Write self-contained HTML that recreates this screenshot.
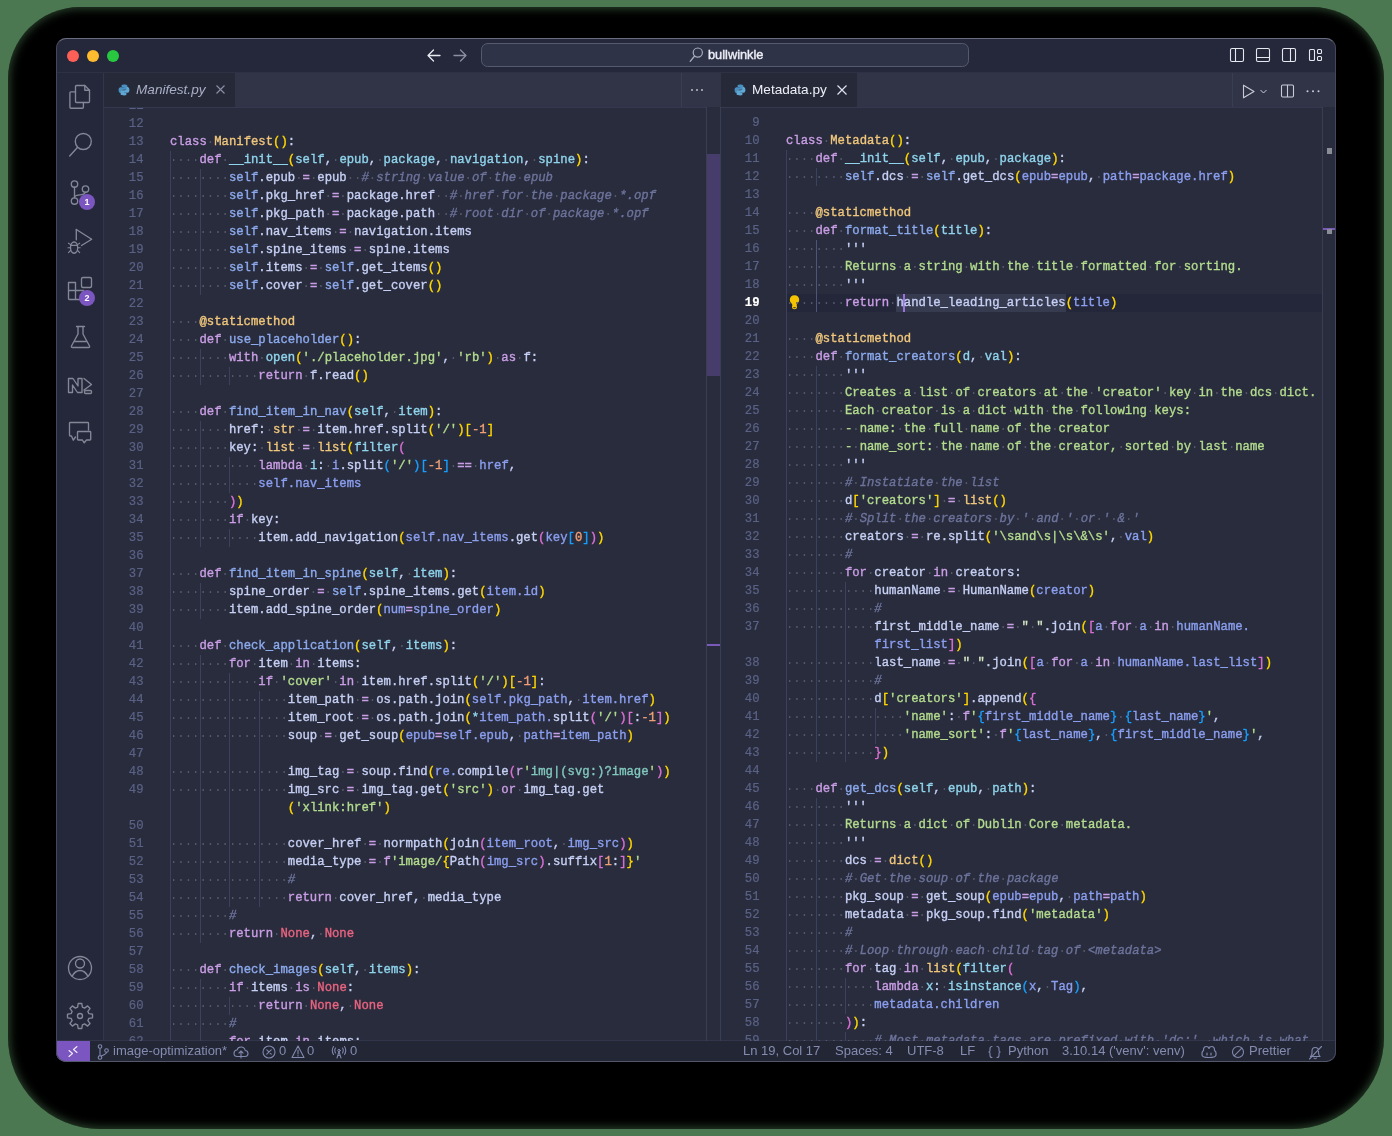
<!DOCTYPE html>
<html><head><meta charset="utf-8">
<style>
*{margin:0;padding:0;box-sizing:border-box}
html,body{width:1392px;height:1136px;overflow:hidden;background:#4b7751;position:relative;font-family:"Liberation Sans",sans-serif}
.abs{position:absolute}
#shadow{position:absolute;left:8px;top:7px;width:1376px;height:1122px;border-radius:72px 72px 92px 92px;background:#000;box-shadow:inset 0 0 8px 2px rgba(75,119,81,.55)}
#win{will-change:transform;position:absolute;left:56px;top:38px;width:1280px;height:1024px;border-radius:10px;overflow:hidden;background:#292c3c}
#wborder{position:absolute;left:56px;top:38px;width:1280px;height:1024px;border-radius:10px;border:1px solid #45485b;border-top-color:#6a6d80;border-bottom-color:#54576a;z-index:50}
#title{position:absolute;left:0;top:0;width:1280px;height:34px;background:#25283a}
.tl{position:absolute;top:12px;width:12px;height:12px;border-radius:50%}
#act{position:absolute;left:0;top:34px;width:48px;height:969px;background:#25283a;border-right:1px solid #33364a}
#tabs1{position:absolute;left:48px;top:34px;width:616px;height:35px;background:#303446}
#tabs2{position:absolute;left:664px;top:34px;width:616px;height:35px;background:#303446}
.tab{position:absolute;top:0;height:35px;background:#262938;white-space:pre;font-size:13.6px;color:#e4e8f6}
#status{position:absolute;left:0;top:1002px;width:1280px;height:22px;background:#232634;border-top:1px solid #33364a;color:#858cb0;font-size:13px}
.sb{position:absolute;top:1.5px;white-space:pre}
.ln{position:absolute;width:60px;text-align:right;font:12.27px/18px "Liberation Mono",monospace;color:#5b6286;white-space:pre;-webkit-text-stroke:0.2px currentColor;transform:scaleY(1.1);transform-origin:0 12px}
.ln.act{color:#ffffff;font-weight:bold}
.gd{position:absolute;width:1px;height:18px;background:#3c4160}
.ga{background:#4f5578}
.cr{position:absolute;font:12.27px/18px "Liberation Mono",monospace;color:#c6d0f5;white-space:pre;-webkit-text-stroke:0.35px currentColor;transform:scaleY(1.1);transform-origin:0 12px}
.cr b{font-weight:normal}
.cr i{font-style:normal;color:#55596c;-webkit-text-stroke:0;position:relative;top:1px}
.k{color:#ca9ee6}.c{color:#efc67c}.f{color:#8caaee}.p{color:#8fd4ec}.s{color:#8caaee}.o{color:#ca9ee6}
.cr b.cm{color:#6d739b;font-style:italic}.d{color:#efc67c}.bi{color:#8fd4ec}.st{color:#b3dc8e}.ty{color:#efc67c}
.n{color:#ef9f76}.no{color:#eb6480}.y{color:#ffd700}.m{color:#da70d6}.u{color:#179fff}.a{color:#8b9ff0}
.rx{color:#81c8be}.q2{color:#d5e6c6}.f2{color:#8fd4ec}.q{color:#c6d0f5}.ds{color:#b3dc8e}.hl{color:#c6d0f5}
svg{position:absolute;overflow:visible}
.ic{fill:none;stroke:#8b8fa3;stroke-width:1.2}
.badge{position:absolute;width:16px;height:16px;border-radius:50%;background:#7c56c0;color:#fff;font:bold 9px/16px "Liberation Sans";text-align:center}
</style></head><body>
<div id="shadow"></div>
<div id="win">
  <div id="title">
    <div class="tl" style="left:11px;background:#fe5f57"></div>
    <div class="tl" style="left:31px;background:#febc2e"></div>
    <div class="tl" style="left:51px;background:#28c840"></div>
    <svg style="left:0;top:0" width="1280" height="34">
      <g fill="none" stroke-linecap="round" stroke-linejoin="round">
        <path d="M372 17.5H384 M377.5 12L372 17.5L377.5 23" stroke="#e8eaf2" stroke-width="1.3"/>
        <path d="M398 17.5H410 M404.5 12L410 17.5L404.5 23" stroke="#8a8ea3" stroke-width="1.3"/>
        <rect x="425.5" y="5.5" width="487" height="23" rx="6" fill="#2f3347" stroke="#565a6e" stroke-width="1"/>
        <circle cx="641.8" cy="14.6" r="4.6" stroke="#a9adbd" stroke-width="1.2"/>
        <path d="M638.6 18L634.2 23.3" stroke="#a9adbd" stroke-width="1.3"/>
        <rect x="1174.5" y="10.5" width="13" height="13" rx="1.5" stroke="#e6e8f0" stroke-width="1.1"/>
        <path d="M1179.5 10.5V23.5" stroke="#e6e8f0" stroke-width="1.1"/>
        <rect x="1200.5" y="10.5" width="13" height="13" rx="1.5" stroke="#e6e8f0" stroke-width="1.1"/>
        <path d="M1200.5 19.5H1213.5" stroke="#e6e8f0" stroke-width="1.1"/>
        <rect x="1226.5" y="10.5" width="13" height="13" rx="1.5" stroke="#e6e8f0" stroke-width="1.1"/>
        <path d="M1234.5 10.5V23.5" stroke="#e6e8f0" stroke-width="1.1"/>
        <rect x="1253.5" y="11.5" width="5" height="11" rx="1" stroke="#e6e8f0" stroke-width="1.1"/>
        <rect x="1261.5" y="11.5" width="4" height="4" rx="1" stroke="#e6e8f0" stroke-width="1.1"/>
        <rect x="1261.5" y="18.5" width="4" height="4" rx="1" stroke="#e6e8f0" stroke-width="1.1"/>
      </g>
    </svg>
    <div class="abs" style="left:652px;top:9px;font:12.8px/16px 'Liberation Sans';color:#eceef6;-webkit-text-stroke:0.4px #eceef6">bullwinkle</div>
  </div>
  <div id="act">
    <svg style="left:0;top:0" width="48" height="969" fill="none" stroke="#838898" stroke-width="1.35" stroke-linejoin="round" stroke-linecap="round">
      <!-- explorer -->
      <path d="M19.5 19.8H14.9Q13.9 19.8 13.9 20.8V35.2Q13.9 36.2 14.9 36.2H26.4Q27.4 36.2 27.4 35.2V30.5"/>
      <path d="M20.5 13.5H28.8L33.5 18.2V29.5Q33.5 30.5 32.5 30.5H20.5Q19.5 30.5 19.5 29.5V14.5Q19.5 13.5 20.5 13.5Z"/>
      <path d="M28.8 13.5V18.2H33.5"/>
      <!-- search -->
      <circle cx="27.3" cy="69.5" r="8"/>
      <path d="M21.6 75.2L13.7 84"/>
      <!-- scm -->
      <circle cx="18.5" cy="112" r="3.2"/>
      <circle cx="29.5" cy="117" r="3.2"/>
      <circle cx="18.5" cy="129" r="3.2"/>
      <path d="M18.5 115.2V125.8 M18.6 125Q19.5 122.8 24 122.8Q28.3 122.8 29.4 120.3"/>
      <!-- run debug -->
      <path d="M20.3 157.5L35.7 167.2L25.5 173.5"/>
      <path d="M20.3 157.5V167.8"/>
      <ellipse cx="18.1" cy="175.6" rx="3.6" ry="5.6"/>
      <path d="M14.8 173.4H21.4 M12.5 171.2L14.6 172.6 M23.7 171.2L21.6 172.6 M12 175.8H14.5 M21.7 175.8H24.2 M12.5 180.6L14.6 178.5 M23.7 180.6L21.6 178.5" stroke-width="1.1"/>
      <!-- extensions -->
      <path d="M12.5 210.5H19.5V218.5H12.5Z M12.5 218.5H19.5V227.5H13.5Q12.5 227.5 12.5 226.5Z M19.5 218.5H27.5V226.5Q27.5 227.5 26.5 227.5H19.5"/>
      <rect x="25.5" y="205.5" width="10" height="10" rx="1.5"/>
      <!-- testing flask -->
      <path d="M20.5 254.5H28.5 M22 254.5V262L15.5 274Q15 275.5 16.5 275.5H32.5Q34 275.5 33.5 274L27 262V254.5 M18.5 269.5H30.5"/>
      <!-- N> icon -->
      <path d="M12.5 320.5V306.5H17L22 314V306.5H26V320.5H21.5L16.5 313V320.5Z"/>
      <path d="M28 306.5L35.5 312.5L28 318"/>
      <rect x="28.5" y="318.5" width="7" height="3" rx="1"/>
      <!-- chat -->
      <path d="M32.5 358V351.3Q32.5 350.5 31.7 350.5H14.3Q13.5 350.5 13.5 351.3V363.2Q13.5 364 14.3 364H15.5L17.3 368.2L19.5 365"/>
      <path d="M22.3 359.5H34Q34.7 359.5 34.7 360.3V367.2Q34.7 368 34 368H30.5L28.2 370.8L26.4 368H22.3Q21.5 368 21.5 367.2V360.3Q21.5 359.5 22.3 359.5Z"/>
      <!-- account -->
      <circle cx="24" cy="896" r="11.5"/>
      <circle cx="24" cy="891.5" r="4.5"/>
      <path d="M16 904.5Q19 898.5 24 898.5Q29 898.5 32 904.5"/>
      <!-- gear -->
      <path d="M22.2 931.5H25.8L26.4 935.2L28.6 936.1L31.6 933.9L34.1 936.4L31.9 939.4L32.8 941.6L36.5 942.2V945.8L32.8 946.4L31.9 948.6L34.1 951.6L31.6 954.1L28.6 951.9L26.4 952.8L25.8 956.5H22.2L21.6 952.8L19.4 951.9L16.4 954.1L13.9 951.6L16.1 948.6L15.2 946.4L11.5 945.8V942.2L15.2 941.6L16.1 939.4L13.9 936.4L16.4 933.9L19.4 936.1L21.6 935.2Z"/>
      <circle cx="24" cy="944" r="2.5"/>
    </svg>
    <div class="badge" style="left:23px;top:122px">1</div>
    <div class="badge" style="left:23px;top:218px">2</div>
  </div>
  <div id="tabs1">
    <div class="tab" style="left:0;width:131px">
      <svg style="left:14px;top:12px" width="12" height="12" viewBox="0 0 12 12"><path d="M5.8 0.6C3.5 0.6 3.6 1.6 3.6 1.6V2.9H5.9V3.3H2.7C2.7 3.3 0.6 3.1 0.6 6.1C0.6 9.1 2.5 9 2.5 9H3.5V7.6C3.5 7.6 3.4 5.8 5.3 5.8H7.7C7.7 5.8 9.4 5.8 9.4 4.1V1.9C9.4 1.9 9.7 0.6 5.8 0.6Z" fill="#4a8fc0"/><path d="M6.2 11.4C8.5 11.4 8.4 10.4 8.4 10.4V9.1H6.1V8.7H9.3C9.3 8.7 11.4 8.9 11.4 5.9C11.4 2.9 9.5 3 9.5 3H8.5V4.4C8.5 4.4 8.6 6.2 6.7 6.2H4.3C4.3 6.2 2.6 6.2 2.6 7.9V10.1C2.6 10.1 2.3 11.4 6.2 11.4Z" fill="#5fa8d3"/></svg>
      <div class="abs" style="left:32px;top:10px;font-style:italic;color:#a9afc6;font-size:13.6px">Manifest.py</div>
      <svg style="left:112px;top:13px" width="9" height="9"><path d="M0.5 0.5L8.5 8.5M8.5 0.5L0.5 8.5" stroke="#8a8fa5" stroke-width="1.1"/></svg>
    </div>
    <svg style="left:586px;top:16px" width="16" height="4"><circle cx="2" cy="2" r="1" fill="#b8bccb"/><circle cx="7" cy="2" r="1" fill="#b8bccb"/><circle cx="12" cy="2" r="1" fill="#b8bccb"/></svg>
    <div class="abs" style="left:577px;top:0;width:1px;height:35px;background:#3a3e52"></div>
  </div>
  <div id="tabs2">
    <div class="tab" style="left:1px;width:136px">
      <svg style="left:13px;top:12px" width="12" height="12" viewBox="0 0 12 12"><path d="M5.8 0.6C3.5 0.6 3.6 1.6 3.6 1.6V2.9H5.9V3.3H2.7C2.7 3.3 0.6 3.1 0.6 6.1C0.6 9.1 2.5 9 2.5 9H3.5V7.6C3.5 7.6 3.4 5.8 5.3 5.8H7.7C7.7 5.8 9.4 5.8 9.4 4.1V1.9C9.4 1.9 9.7 0.6 5.8 0.6Z" fill="#4a8fc0"/><path d="M6.2 11.4C8.5 11.4 8.4 10.4 8.4 10.4V9.1H6.1V8.7H9.3C9.3 8.7 11.4 8.9 11.4 5.9C11.4 2.9 9.5 3 9.5 3H8.5V4.4C8.5 4.4 8.6 6.2 6.7 6.2H4.3C4.3 6.2 2.6 6.2 2.6 7.9V10.1C2.6 10.1 2.3 11.4 6.2 11.4Z" fill="#5fa8d3"/></svg>
      <div class="abs" style="left:31px;top:10px;color:#eef0f8;font-size:13.6px">Metadata.py</div>
      <svg style="left:116px;top:13px" width="10" height="10"><path d="M0.5 0.5L9.5 9.5M9.5 0.5L0.5 9.5" stroke="#e0e3ee" stroke-width="1.2"/></svg>
    </div>
    <svg style="left:0;top:0" width="616" height="35" fill="none" stroke-linejoin="round">
      <path d="M523.5 13.2V25.8L534 19.5Z" stroke="#c9ccd8" stroke-width="1.1"/>
      <path d="M540.5 18L543.5 21L546.5 18" stroke="#c9ccd8" stroke-width="1"/>
      <rect x="561.5" y="13" width="12" height="12" rx="1.2" stroke="#c9ccd8" stroke-width="1.1"/>
      <path d="M567.5 13V25" stroke="#c9ccd8" stroke-width="1.1"/>
      <circle cx="587.5" cy="19.3" r="1" fill="#c9ccd8" stroke="none"/><circle cx="593" cy="19.3" r="1" fill="#c9ccd8" stroke="none"/><circle cx="598.5" cy="19.3" r="1" fill="#c9ccd8" stroke="none"/>
    </svg>
    <div class="abs" style="left:512px;top:0;width:1px;height:35px;background:#3a3e52"></div>
  </div>
  <div class="abs" style="left:0;top:34px;width:1280px;height:1px;background:#2e3143"></div>
  <div id="status">
    <div class="abs" style="left:0;top:0;width:34px;height:22px;background:#7c56c0"></div>
    <svg style="left:0;top:-0.5px" width="1280" height="22" fill="none" stroke-linecap="round" stroke-linejoin="round">
      <path d="M13 9.5L16.5 12.5L13 15.5 M21 5.5L17.5 8.5L21 11.5" stroke="#f2eefa" stroke-width="1.1"/>
      <!-- branch -->
      <circle cx="44" cy="5.5" r="1.8" stroke="#8088ad" stroke-width="1.1"/>
      <circle cx="44" cy="16.5" r="1.8" stroke="#8088ad" stroke-width="1.1"/>
      <circle cx="50.5" cy="9.5" r="1.8" stroke="#8088ad" stroke-width="1.1"/>
      <path d="M44 7.3V14.7 M50.5 11.3Q50.5 13 45.3 15" stroke="#8088ad" stroke-width="1.1"/>
      <!-- cloud -->
      <path d="M181 15.5H189Q192 15.5 192 12.5Q192 9.8 189.2 9.5Q188.5 6 185 6Q181.8 6 181 9Q178 9.3 178 12.3Q178 15.5 181 15.5Z M185 10V17 M183 12L185 10L187 12" stroke="#8088ad" stroke-width="1.1"/>
      <!-- error circle -->
      <circle cx="213" cy="11" r="6" stroke="#8088ad" stroke-width="1.1"/>
      <path d="M210.8 8.8L215.2 13.2 M215.2 8.8L210.8 13.2" stroke="#8088ad" stroke-width="1.1"/>
      <!-- warning -->
      <path d="M242 5L248 16.5H236Z M242 9V13 M242 14.5V15" stroke="#8088ad" stroke-width="1.1"/>
      <!-- radio tower -->
      <path d="M283 10.5L281 17 M283 10.5L285 17 M281.8 14.5H284.2 M279.5 7Q278 9 279.5 12 M286.5 7Q288 9 286.5 12 M277.5 5.5Q275 9.5 277.5 13.5 M288.5 5.5Q291 9.5 288.5 13.5" stroke="#8088ad" stroke-width="1.1"/>
      <circle cx="283" cy="9.5" r="1.2" stroke="#8088ad" stroke-width="1"/>
      <!-- braces -->
      <path d="M936 5.5Q934 5.5 934 7.5V9.5Q934 11 932.8 11Q934 11 934 12.5V14.5Q934 16.5 936 16.5 M941 5.5Q943 5.5 943 7.5V9.5Q943 11 944.2 11Q943 11 943 12.5V14.5Q943 16.5 941 16.5" stroke="#8088ad" stroke-width="1.1"/>
      <!-- copilot -->
      <path d="M1147.5 9Q1147.5 5.5 1150.5 5.5Q1152.5 5.5 1153 7.5Q1153.5 5.5 1155.5 5.5Q1158.5 5.5 1158.5 9V9.5Q1160 10.5 1160 12V14Q1160 16.5 1153 16.5Q1146 16.5 1146 14V12Q1146 10.5 1147.5 9.5Z M1151 12V14 M1155 12V14" stroke="#8088ad" stroke-width="1.2"/>
      <!-- prettier circle slash -->
      <circle cx="1182" cy="11" r="5.5" stroke="#8088ad" stroke-width="1.1"/>
      <path d="M1178.2 14.8L1185.8 7.2" stroke="#8088ad" stroke-width="1.1"/>
      <!-- bell slash -->
      <path d="M1254.5 15.5H1264Q1262.5 14 1262.5 11.5V10Q1262.5 6.5 1259.2 6.5Q1256 6.5 1256 10V11.5Q1256 14 1254.5 15.5 M1258 17Q1259.2 18.5 1260.5 17 M1253.5 18L1265.5 5.5" stroke="#8088ad" stroke-width="1.1"/>
    </svg>
    <div class="sb" style="left:57px">image-optimization*</div>
    <div class="sb" style="left:223px">0</div>
    <div class="sb" style="left:251px">0</div>
    <div class="sb" style="left:294px">0</div>
    <div class="sb" style="left:687px">Ln 19, Col 17</div>
    <div class="sb" style="left:779px">Spaces: 4</div>
    <div class="sb" style="left:851px">UTF-8</div>
    <div class="sb" style="left:904px">LF</div>
    <div class="sb" style="left:952px">Python</div>
    <div class="sb" style="left:1006px">3.10.14 ('venv': venv)</div>
    <div class="sb" style="left:1193px">Prettier</div>
  </div>
</div>
<div id="wborder"></div>
<div class="abs" style="left:104px;top:107px;width:602px;height:1px;background:#343850;z-index:5"></div>
<div class="abs" style="left:721px;top:107px;width:601px;height:1px;background:#343850;z-index:5"></div>
<div id="code" style="position:absolute;left:0;top:0;width:1392px;height:1136px;will-change:transform">
  <div style="position:absolute;left:104px;top:107px;width:616px;height:934px;overflow:hidden">
    <div style="position:absolute;left:-104px;top:-107px">
<div class="ln" style="top:97px;left:83.5px">11</div>
<div class="ln" style="top:115px;left:83.5px">12</div>
<div class="ln" style="top:133px;left:83.5px">13</div>
<div class="cr" style="top:133px;left:170.00px"><b class="k">class</b><i>·</i><b class="c">Manifest</b><b class="y">()</b><b class="t">:</b></div>
<div class="ln" style="top:151px;left:83.5px">14</div>
<div class="gd" style="top:151px;left:170px"></div>
<div class="cr" style="top:151px;left:170.00px"><i>····</i><b class="k">def</b><i>·</i><b class="f2">__init__</b><b class="y">(</b><b class="p">self</b><b class="t">,</b><i>·</i><b class="p">epub</b><b class="t">,</b><i>·</i><b class="p">package</b><b class="t">,</b><i>·</i><b class="p">navigation</b><b class="t">,</b><i>·</i><b class="p">spine</b><b class="y">)</b><b class="t">:</b></div>
<div class="ln" style="top:169px;left:83.5px">15</div>
<div class="gd" style="top:169px;left:170px"></div>
<div class="gd" style="top:169px;left:200px"></div>
<div class="cr" style="top:169px;left:170.00px"><i>········</i><b class="s">self</b><b class="t">.epub</b><i>·</i><b class="o">=</b><i>·</i><b class="t">epub</b><i>··</i><b class="cm">#</b><i>·</i><b class="cm">string</b><i>·</i><b class="cm">value</b><i>·</i><b class="cm">of</b><i>·</i><b class="cm">the</b><i>·</i><b class="cm">epub</b></div>
<div class="ln" style="top:187px;left:83.5px">16</div>
<div class="gd" style="top:187px;left:170px"></div>
<div class="gd" style="top:187px;left:200px"></div>
<div class="cr" style="top:187px;left:170.00px"><i>········</i><b class="s">self</b><b class="t">.pkg_href</b><i>·</i><b class="o">=</b><i>·</i><b class="t">package.href</b><i>··</i><b class="cm">#</b><i>·</i><b class="cm">href</b><i>·</i><b class="cm">for</b><i>·</i><b class="cm">the</b><i>·</i><b class="cm">package</b><i>·</i><b class="cm">*.opf</b></div>
<div class="ln" style="top:205px;left:83.5px">17</div>
<div class="gd" style="top:205px;left:170px"></div>
<div class="gd" style="top:205px;left:200px"></div>
<div class="cr" style="top:205px;left:170.00px"><i>········</i><b class="s">self</b><b class="t">.pkg_path</b><i>·</i><b class="o">=</b><i>·</i><b class="t">package.path</b><i>··</i><b class="cm">#</b><i>·</i><b class="cm">root</b><i>·</i><b class="cm">dir</b><i>·</i><b class="cm">of</b><i>·</i><b class="cm">package</b><i>·</i><b class="cm">*.opf</b></div>
<div class="ln" style="top:223px;left:83.5px">18</div>
<div class="gd" style="top:223px;left:170px"></div>
<div class="gd" style="top:223px;left:200px"></div>
<div class="cr" style="top:223px;left:170.00px"><i>········</i><b class="s">self</b><b class="t">.nav_items</b><i>·</i><b class="o">=</b><i>·</i><b class="t">navigation.items</b></div>
<div class="ln" style="top:241px;left:83.5px">19</div>
<div class="gd" style="top:241px;left:170px"></div>
<div class="gd" style="top:241px;left:200px"></div>
<div class="cr" style="top:241px;left:170.00px"><i>········</i><b class="s">self</b><b class="t">.spine_items</b><i>·</i><b class="o">=</b><i>·</i><b class="t">spine.items</b></div>
<div class="ln" style="top:259px;left:83.5px">20</div>
<div class="gd" style="top:259px;left:170px"></div>
<div class="gd" style="top:259px;left:200px"></div>
<div class="cr" style="top:259px;left:170.00px"><i>········</i><b class="s">self</b><b class="t">.items</b><i>·</i><b class="o">=</b><i>·</i><b class="s">self</b><b class="t">.get_items</b><b class="y">()</b></div>
<div class="ln" style="top:277px;left:83.5px">21</div>
<div class="gd" style="top:277px;left:170px"></div>
<div class="gd" style="top:277px;left:200px"></div>
<div class="cr" style="top:277px;left:170.00px"><i>········</i><b class="s">self</b><b class="t">.cover</b><i>·</i><b class="o">=</b><i>·</i><b class="s">self</b><b class="t">.get_cover</b><b class="y">()</b></div>
<div class="ln" style="top:295px;left:83.5px">22</div>
<div class="gd" style="top:295px;left:170px"></div>
<div class="ln" style="top:313px;left:83.5px">23</div>
<div class="gd" style="top:313px;left:170px"></div>
<div class="cr" style="top:313px;left:170.00px"><i>····</i><b class="d">@staticmethod</b></div>
<div class="ln" style="top:331px;left:83.5px">24</div>
<div class="gd" style="top:331px;left:170px"></div>
<div class="cr" style="top:331px;left:170.00px"><i>····</i><b class="k">def</b><i>·</i><b class="f">use_placeholder</b><b class="y">()</b><b class="t">:</b></div>
<div class="ln" style="top:349px;left:83.5px">25</div>
<div class="gd" style="top:349px;left:170px"></div>
<div class="gd" style="top:349px;left:200px"></div>
<div class="cr" style="top:349px;left:170.00px"><i>········</i><b class="k">with</b><i>·</i><b class="bi">open</b><b class="y">(</b><b class="st">&#x27;./placeholder.jpg&#x27;</b><b class="t">,</b><i>·</i><b class="st">&#x27;rb&#x27;</b><b class="y">)</b><i>·</i><b class="k">as</b><i>·</i><b class="t">f:</b></div>
<div class="ln" style="top:367px;left:83.5px">26</div>
<div class="gd" style="top:367px;left:170px"></div>
<div class="gd" style="top:367px;left:200px"></div>
<div class="gd" style="top:367px;left:229px"></div>
<div class="cr" style="top:367px;left:170.00px"><i>············</i><b class="k">return</b><i>·</i><b class="t">f.read</b><b class="y">()</b></div>
<div class="ln" style="top:385px;left:83.5px">27</div>
<div class="gd" style="top:385px;left:170px"></div>
<div class="ln" style="top:403px;left:83.5px">28</div>
<div class="gd" style="top:403px;left:170px"></div>
<div class="cr" style="top:403px;left:170.00px"><i>····</i><b class="k">def</b><i>·</i><b class="f">find_item_in_nav</b><b class="y">(</b><b class="p">self</b><b class="t">,</b><i>·</i><b class="p">item</b><b class="y">)</b><b class="t">:</b></div>
<div class="ln" style="top:421px;left:83.5px">29</div>
<div class="gd" style="top:421px;left:170px"></div>
<div class="gd" style="top:421px;left:200px"></div>
<div class="cr" style="top:421px;left:170.00px"><i>········</i><b class="t">href:</b><i>·</i><b class="ty">str</b><i>·</i><b class="o">=</b><i>·</i><b class="t">item.href.split</b><b class="y">(</b><b class="st">&#x27;/&#x27;</b><b class="y">)[</b><b class="n">-1</b><b class="y">]</b></div>
<div class="ln" style="top:439px;left:83.5px">30</div>
<div class="gd" style="top:439px;left:170px"></div>
<div class="gd" style="top:439px;left:200px"></div>
<div class="cr" style="top:439px;left:170.00px"><i>········</i><b class="t">key:</b><i>·</i><b class="ty">list</b><i>·</i><b class="o">=</b><i>·</i><b class="ty">list</b><b class="y">(</b><b class="bi">filter</b><b class="m">(</b></div>
<div class="ln" style="top:457px;left:83.5px">31</div>
<div class="gd" style="top:457px;left:170px"></div>
<div class="gd" style="top:457px;left:200px"></div>
<div class="gd" style="top:457px;left:229px"></div>
<div class="cr" style="top:457px;left:170.00px"><i>············</i><b class="k">lambda</b><i>·</i><b class="p">i</b><b class="t">:</b><i>·</i><b class="a">i</b><b class="t">.split</b><b class="u">(</b><b class="st">&#x27;/&#x27;</b><b class="u">)[</b><b class="n">-1</b><b class="u">]</b><i>·</i><b class="o">==</b><i>·</i><b class="a">href</b><b class="t">,</b></div>
<div class="ln" style="top:475px;left:83.5px">32</div>
<div class="gd" style="top:475px;left:170px"></div>
<div class="gd" style="top:475px;left:200px"></div>
<div class="gd" style="top:475px;left:229px"></div>
<div class="cr" style="top:475px;left:170.00px"><i>············</i><b class="a">self.nav_items</b></div>
<div class="ln" style="top:493px;left:83.5px">33</div>
<div class="gd" style="top:493px;left:170px"></div>
<div class="gd" style="top:493px;left:200px"></div>
<div class="cr" style="top:493px;left:170.00px"><i>········</i><b class="m">)</b><b class="y">)</b></div>
<div class="ln" style="top:511px;left:83.5px">34</div>
<div class="gd" style="top:511px;left:170px"></div>
<div class="gd" style="top:511px;left:200px"></div>
<div class="cr" style="top:511px;left:170.00px"><i>········</i><b class="k">if</b><i>·</i><b class="t">key:</b></div>
<div class="ln" style="top:529px;left:83.5px">35</div>
<div class="gd" style="top:529px;left:170px"></div>
<div class="gd" style="top:529px;left:200px"></div>
<div class="gd" style="top:529px;left:229px"></div>
<div class="cr" style="top:529px;left:170.00px"><i>············</i><b class="t">item.add_navigation</b><b class="y">(</b><b class="a">self.nav_items</b><b class="t">.get</b><b class="m">(</b><b class="a">key</b><b class="u">[</b><b class="n">0</b><b class="u">]</b><b class="m">)</b><b class="y">)</b></div>
<div class="ln" style="top:547px;left:83.5px">36</div>
<div class="gd" style="top:547px;left:170px"></div>
<div class="ln" style="top:565px;left:83.5px">37</div>
<div class="gd" style="top:565px;left:170px"></div>
<div class="cr" style="top:565px;left:170.00px"><i>····</i><b class="k">def</b><i>·</i><b class="f">find_item_in_spine</b><b class="y">(</b><b class="p">self</b><b class="t">,</b><i>·</i><b class="p">item</b><b class="y">)</b><b class="t">:</b></div>
<div class="ln" style="top:583px;left:83.5px">38</div>
<div class="gd" style="top:583px;left:170px"></div>
<div class="gd" style="top:583px;left:200px"></div>
<div class="cr" style="top:583px;left:170.00px"><i>········</i><b class="t">spine_order</b><i>·</i><b class="o">=</b><i>·</i><b class="s">self</b><b class="t">.spine_items.get</b><b class="y">(</b><b class="a">item.id</b><b class="y">)</b></div>
<div class="ln" style="top:601px;left:83.5px">39</div>
<div class="gd" style="top:601px;left:170px"></div>
<div class="gd" style="top:601px;left:200px"></div>
<div class="cr" style="top:601px;left:170.00px"><i>········</i><b class="t">item.add_spine_order</b><b class="y">(</b><b class="a">num</b><b class="o">=</b><b class="a">spine_order</b><b class="y">)</b></div>
<div class="ln" style="top:619px;left:83.5px">40</div>
<div class="gd" style="top:619px;left:170px"></div>
<div class="ln" style="top:637px;left:83.5px">41</div>
<div class="gd" style="top:637px;left:170px"></div>
<div class="cr" style="top:637px;left:170.00px"><i>····</i><b class="k">def</b><i>·</i><b class="f">check_application</b><b class="y">(</b><b class="p">self</b><b class="t">,</b><i>·</i><b class="p">items</b><b class="y">)</b><b class="t">:</b></div>
<div class="ln" style="top:655px;left:83.5px">42</div>
<div class="gd" style="top:655px;left:170px"></div>
<div class="gd" style="top:655px;left:200px"></div>
<div class="cr" style="top:655px;left:170.00px"><i>········</i><b class="k">for</b><i>·</i><b class="t">item</b><i>·</i><b class="k">in</b><i>·</i><b class="t">items:</b></div>
<div class="ln" style="top:673px;left:83.5px">43</div>
<div class="gd" style="top:673px;left:170px"></div>
<div class="gd" style="top:673px;left:200px"></div>
<div class="gd" style="top:673px;left:229px"></div>
<div class="cr" style="top:673px;left:170.00px"><i>············</i><b class="k">if</b><i>·</i><b class="st">&#x27;cover&#x27;</b><i>·</i><b class="k">in</b><i>·</i><b class="t">item.href.split</b><b class="y">(</b><b class="st">&#x27;/&#x27;</b><b class="y">)[</b><b class="n">-1</b><b class="y">]</b><b class="t">:</b></div>
<div class="ln" style="top:691px;left:83.5px">44</div>
<div class="gd" style="top:691px;left:170px"></div>
<div class="gd" style="top:691px;left:200px"></div>
<div class="gd" style="top:691px;left:229px"></div>
<div class="gd" style="top:691px;left:259px"></div>
<div class="cr" style="top:691px;left:170.00px"><i>················</i><b class="t">item_path</b><i>·</i><b class="o">=</b><i>·</i><b class="t">os.path.join</b><b class="y">(</b><b class="a">self.pkg_path</b><b class="t">,</b><i>·</i><b class="a">item.href</b><b class="y">)</b></div>
<div class="ln" style="top:709px;left:83.5px">45</div>
<div class="gd" style="top:709px;left:170px"></div>
<div class="gd" style="top:709px;left:200px"></div>
<div class="gd" style="top:709px;left:229px"></div>
<div class="gd" style="top:709px;left:259px"></div>
<div class="cr" style="top:709px;left:170.00px"><i>················</i><b class="t">item_root</b><i>·</i><b class="o">=</b><i>·</i><b class="t">os.path.join</b><b class="y">(</b><b class="bi">*</b><b class="a">item_path.</b><b class="t">split</b><b class="m">(</b><b class="st">&#x27;/&#x27;</b><b class="m">)[</b><b class="t">:</b><b class="n">-1</b><b class="m">]</b><b class="y">)</b></div>
<div class="ln" style="top:727px;left:83.5px">46</div>
<div class="gd" style="top:727px;left:170px"></div>
<div class="gd" style="top:727px;left:200px"></div>
<div class="gd" style="top:727px;left:229px"></div>
<div class="gd" style="top:727px;left:259px"></div>
<div class="cr" style="top:727px;left:170.00px"><i>················</i><b class="t">soup</b><i>·</i><b class="o">=</b><i>·</i><b class="t">get_soup</b><b class="y">(</b><b class="a">epub</b><b class="o">=</b><b class="a">self.epub</b><b class="t">,</b><i>·</i><b class="a">path</b><b class="o">=</b><b class="a">item_path</b><b class="y">)</b></div>
<div class="ln" style="top:745px;left:83.5px">47</div>
<div class="gd" style="top:745px;left:170px"></div>
<div class="gd" style="top:745px;left:200px"></div>
<div class="gd" style="top:745px;left:229px"></div>
<div class="gd" style="top:745px;left:259px"></div>
<div class="ln" style="top:763px;left:83.5px">48</div>
<div class="gd" style="top:763px;left:170px"></div>
<div class="gd" style="top:763px;left:200px"></div>
<div class="gd" style="top:763px;left:229px"></div>
<div class="gd" style="top:763px;left:259px"></div>
<div class="cr" style="top:763px;left:170.00px"><i>················</i><b class="t">img_tag</b><i>·</i><b class="o">=</b><i>·</i><b class="t">soup.find</b><b class="y">(</b><b class="a">re.</b><b class="t">compile</b><b class="m">(</b><b class="k">r</b><b class="st">&#x27;</b><b class="rx">img|(svg:)?image</b><b class="st">&#x27;</b><b class="m">)</b><b class="y">)</b></div>
<div class="ln" style="top:781px;left:83.5px">49</div>
<div class="gd" style="top:781px;left:170px"></div>
<div class="gd" style="top:781px;left:200px"></div>
<div class="gd" style="top:781px;left:229px"></div>
<div class="gd" style="top:781px;left:259px"></div>
<div class="cr" style="top:781px;left:170.00px"><i>················</i><b class="t">img_src</b><i>·</i><b class="o">=</b><i>·</i><b class="t">img_tag.get</b><b class="y">(</b><b class="st">&#x27;src&#x27;</b><b class="y">)</b><i>·</i><b class="k">or</b><i>·</i><b class="t">img_tag.get</b></div>
<div class="gd" style="top:799px;left:170px"></div>
<div class="gd" style="top:799px;left:200px"></div>
<div class="gd" style="top:799px;left:229px"></div>
<div class="gd" style="top:799px;left:259px"></div>
<div class="cr" style="top:799px;left:287.79px"><b class="y">(</b><b class="st">&#x27;xlink:href&#x27;</b><b class="y">)</b></div>
<div class="ln" style="top:817px;left:83.5px">50</div>
<div class="gd" style="top:817px;left:170px"></div>
<div class="gd" style="top:817px;left:200px"></div>
<div class="gd" style="top:817px;left:229px"></div>
<div class="gd" style="top:817px;left:259px"></div>
<div class="ln" style="top:835px;left:83.5px">51</div>
<div class="gd" style="top:835px;left:170px"></div>
<div class="gd" style="top:835px;left:200px"></div>
<div class="gd" style="top:835px;left:229px"></div>
<div class="gd" style="top:835px;left:259px"></div>
<div class="cr" style="top:835px;left:170.00px"><i>················</i><b class="t">cover_href</b><i>·</i><b class="o">=</b><i>·</i><b class="t">normpath</b><b class="y">(</b><b class="t">join</b><b class="m">(</b><b class="a">item_root</b><b class="t">,</b><i>·</i><b class="a">img_src</b><b class="m">)</b><b class="y">)</b></div>
<div class="ln" style="top:853px;left:83.5px">52</div>
<div class="gd" style="top:853px;left:170px"></div>
<div class="gd" style="top:853px;left:200px"></div>
<div class="gd" style="top:853px;left:229px"></div>
<div class="gd" style="top:853px;left:259px"></div>
<div class="cr" style="top:853px;left:170.00px"><i>················</i><b class="t">media_type</b><i>·</i><b class="o">=</b><i>·</i><b class="k">f</b><b class="st">&#x27;image/</b><b class="y">{</b><b class="t">Path</b><b class="m">(</b><b class="a">img_src</b><b class="m">)</b><b class="t">.suffix</b><b class="m">[</b><b class="n">1</b><b class="t">:</b><b class="m">]</b><b class="y">}</b><b class="st">&#x27;</b></div>
<div class="ln" style="top:871px;left:83.5px">53</div>
<div class="gd" style="top:871px;left:170px"></div>
<div class="gd" style="top:871px;left:200px"></div>
<div class="gd" style="top:871px;left:229px"></div>
<div class="gd" style="top:871px;left:259px"></div>
<div class="cr" style="top:871px;left:170.00px"><i>················</i><b class="cm">#</b></div>
<div class="ln" style="top:889px;left:83.5px">54</div>
<div class="gd" style="top:889px;left:170px"></div>
<div class="gd" style="top:889px;left:200px"></div>
<div class="gd" style="top:889px;left:229px"></div>
<div class="gd" style="top:889px;left:259px"></div>
<div class="cr" style="top:889px;left:170.00px"><i>················</i><b class="k">return</b><i>·</i><b class="t">cover_href,</b><i>·</i><b class="t">media_type</b></div>
<div class="ln" style="top:907px;left:83.5px">55</div>
<div class="gd" style="top:907px;left:170px"></div>
<div class="gd" style="top:907px;left:200px"></div>
<div class="cr" style="top:907px;left:170.00px"><i>········</i><b class="cm">#</b></div>
<div class="ln" style="top:925px;left:83.5px">56</div>
<div class="gd" style="top:925px;left:170px"></div>
<div class="gd" style="top:925px;left:200px"></div>
<div class="cr" style="top:925px;left:170.00px"><i>········</i><b class="k">return</b><i>·</i><b class="no">None</b><b class="t">,</b><i>·</i><b class="no">None</b></div>
<div class="ln" style="top:943px;left:83.5px">57</div>
<div class="gd" style="top:943px;left:170px"></div>
<div class="ln" style="top:961px;left:83.5px">58</div>
<div class="gd" style="top:961px;left:170px"></div>
<div class="cr" style="top:961px;left:170.00px"><i>····</i><b class="k">def</b><i>·</i><b class="f">check_images</b><b class="y">(</b><b class="p">self</b><b class="t">,</b><i>·</i><b class="p">items</b><b class="y">)</b><b class="t">:</b></div>
<div class="ln" style="top:979px;left:83.5px">59</div>
<div class="gd" style="top:979px;left:170px"></div>
<div class="gd" style="top:979px;left:200px"></div>
<div class="cr" style="top:979px;left:170.00px"><i>········</i><b class="k">if</b><i>·</i><b class="t">items</b><i>·</i><b class="k">is</b><i>·</i><b class="no">None</b><b class="t">:</b></div>
<div class="ln" style="top:997px;left:83.5px">60</div>
<div class="gd" style="top:997px;left:170px"></div>
<div class="gd" style="top:997px;left:200px"></div>
<div class="gd" style="top:997px;left:229px"></div>
<div class="cr" style="top:997px;left:170.00px"><i>············</i><b class="k">return</b><i>·</i><b class="no">None</b><b class="t">,</b><i>·</i><b class="no">None</b></div>
<div class="ln" style="top:1015px;left:83.5px">61</div>
<div class="gd" style="top:1015px;left:170px"></div>
<div class="gd" style="top:1015px;left:200px"></div>
<div class="cr" style="top:1015px;left:170.00px"><i>········</i><b class="cm">#</b></div>
<div class="ln" style="top:1033px;left:83.5px">62</div>
<div class="gd" style="top:1033px;left:170px"></div>
<div class="gd" style="top:1033px;left:200px"></div>
<div class="cr" style="top:1033px;left:170.00px"><i>········</i><b class="k">for</b><i>·</i><b class="t">item</b><i>·</i><b class="k">in</b><i>·</i><b class="t">items:</b></div>
    </div>
    <div class="abs" style="left:602px;top:0;width:1px;height:934px;background:#3a3e52"></div>
    <div class="abs" style="left:603px;top:47px;width:13px;height:222px;background:#463d6b"></div>
    <div class="abs" style="left:603px;top:537px;width:13px;height:2px;background:#7a5ab8"></div>
  </div>
  <div class="abs" style="left:720px;top:107px;width:1px;height:934px;background:#3a3e52"></div>
  <div style="position:absolute;left:721px;top:107px;width:615px;height:934px;overflow:hidden">
    <div style="position:absolute;left:-721px;top:-107px">
<div class="abs" style="left:787px;top:294px;width:535px;height:18px;background:#24273a"></div>
<div class="abs" style="left:896px;top:294px;width:170px;height:18px;background:#373b50"></div>
<div class="abs" style="left:903px;top:294px;width:2px;height:18px;background:#9a72e0"></div>
<svg style="left:788px;top:294px" width="13" height="16" viewBox="0 0 13 16"><path d="M6.5 1.2C3.7 1.2 1.8 3.2 1.8 5.8C1.8 7.6 2.8 8.7 3.6 9.6C4.1 10.2 4.3 10.7 4.3 11.3V12H8.7V11.3C8.7 10.7 8.9 10.2 9.4 9.6C10.2 8.7 11.2 7.6 11.2 5.8C11.2 3.2 9.3 1.2 6.5 1.2Z" fill="#f5c400"/><path d="M4.6 12.6H8.4V13.6Q8.4 14.8 6.5 14.8Q4.6 14.8 4.6 13.6Z" fill="none" stroke="#f5c400" stroke-width="1.1"/></svg>
<div class="ln" style="top:114px;left:699.5px">9</div>
<div class="ln" style="top:132px;left:699.5px">10</div>
<div class="cr" style="top:132px;left:786.00px"><b class="k">class</b><i>·</i><b class="c">Metadata</b><b class="y">()</b><b class="t">:</b></div>
<div class="ln" style="top:150px;left:699.5px">11</div>
<div class="gd" style="top:150px;left:786px"></div>
<div class="cr" style="top:150px;left:786.00px"><i>····</i><b class="k">def</b><i>·</i><b class="f2">__init__</b><b class="y">(</b><b class="p">self</b><b class="t">,</b><i>·</i><b class="p">epub</b><b class="t">,</b><i>·</i><b class="p">package</b><b class="y">)</b><b class="t">:</b></div>
<div class="ln" style="top:168px;left:699.5px">12</div>
<div class="gd" style="top:168px;left:786px"></div>
<div class="gd" style="top:168px;left:816px"></div>
<div class="cr" style="top:168px;left:786.00px"><i>········</i><b class="s">self</b><b class="t">.dcs</b><i>·</i><b class="o">=</b><i>·</i><b class="s">self</b><b class="t">.get_dcs</b><b class="y">(</b><b class="a">epub</b><b class="o">=</b><b class="a">epub</b><b class="t">,</b><i>·</i><b class="a">path</b><b class="o">=</b><b class="a">package.href</b><b class="y">)</b></div>
<div class="ln" style="top:186px;left:699.5px">13</div>
<div class="gd" style="top:186px;left:786px"></div>
<div class="ln" style="top:204px;left:699.5px">14</div>
<div class="gd" style="top:204px;left:786px"></div>
<div class="cr" style="top:204px;left:786.00px"><i>····</i><b class="d">@staticmethod</b></div>
<div class="ln" style="top:222px;left:699.5px">15</div>
<div class="gd" style="top:222px;left:786px"></div>
<div class="cr" style="top:222px;left:786.00px"><i>····</i><b class="k">def</b><i>·</i><b class="f">format_title</b><b class="y">(</b><b class="p">title</b><b class="y">)</b><b class="t">:</b></div>
<div class="ln" style="top:240px;left:699.5px">16</div>
<div class="gd" style="top:240px;left:786px"></div>
<div class="gd ga" style="top:240px;left:816px"></div>
<div class="cr" style="top:240px;left:786.00px"><i>········</i><b class="q">&#x27;&#x27;&#x27;</b></div>
<div class="ln" style="top:258px;left:699.5px">17</div>
<div class="gd" style="top:258px;left:786px"></div>
<div class="gd ga" style="top:258px;left:816px"></div>
<div class="cr" style="top:258px;left:786.00px"><i>········</i><b class="ds">Returns</b><i>·</i><b class="ds">a</b><i>·</i><b class="ds">string</b><i>·</i><b class="ds">with</b><i>·</i><b class="ds">the</b><i>·</i><b class="ds">title</b><i>·</i><b class="ds">formatted</b><i>·</i><b class="ds">for</b><i>·</i><b class="ds">sorting.</b></div>
<div class="ln" style="top:276px;left:699.5px">18</div>
<div class="gd" style="top:276px;left:786px"></div>
<div class="gd ga" style="top:276px;left:816px"></div>
<div class="cr" style="top:276px;left:786.00px"><i>········</i><b class="q">&#x27;&#x27;&#x27;</b></div>
<div class="ln act" style="top:294px;left:699.5px">19</div>
<div class="gd" style="top:294px;left:786px"></div>
<div class="gd ga" style="top:294px;left:816px"></div>
<div class="cr" style="top:294px;left:786.00px"><i>········</i><b class="k">return</b><i>·</i><b class="hl">handle_leading_articles</b><b class="y">(</b><b class="a">title</b><b class="y">)</b></div>
<div class="ln" style="top:312px;left:699.5px">20</div>
<div class="gd" style="top:312px;left:786px"></div>
<div class="ln" style="top:330px;left:699.5px">21</div>
<div class="gd" style="top:330px;left:786px"></div>
<div class="cr" style="top:330px;left:786.00px"><i>····</i><b class="d">@staticmethod</b></div>
<div class="ln" style="top:348px;left:699.5px">22</div>
<div class="gd" style="top:348px;left:786px"></div>
<div class="cr" style="top:348px;left:786.00px"><i>····</i><b class="k">def</b><i>·</i><b class="f">format_creators</b><b class="y">(</b><b class="p">d</b><b class="t">,</b><i>·</i><b class="p">val</b><b class="y">)</b><b class="t">:</b></div>
<div class="ln" style="top:366px;left:699.5px">23</div>
<div class="gd" style="top:366px;left:786px"></div>
<div class="gd" style="top:366px;left:816px"></div>
<div class="cr" style="top:366px;left:786.00px"><i>········</i><b class="q">&#x27;&#x27;&#x27;</b></div>
<div class="ln" style="top:384px;left:699.5px">24</div>
<div class="gd" style="top:384px;left:786px"></div>
<div class="gd" style="top:384px;left:816px"></div>
<div class="cr" style="top:384px;left:786.00px"><i>········</i><b class="ds">Creates</b><i>·</i><b class="ds">a</b><i>·</i><b class="ds">list</b><i>·</i><b class="ds">of</b><i>·</i><b class="ds">creators</b><i>·</i><b class="ds">at</b><i>·</i><b class="ds">the</b><i>·</i><b class="ds">&#x27;creator&#x27;</b><i>·</i><b class="ds">key</b><i>·</i><b class="ds">in</b><i>·</i><b class="ds">the</b><i>·</i><b class="ds">dcs</b><i>·</i><b class="ds">dict.</b></div>
<div class="ln" style="top:402px;left:699.5px">25</div>
<div class="gd" style="top:402px;left:786px"></div>
<div class="gd" style="top:402px;left:816px"></div>
<div class="cr" style="top:402px;left:786.00px"><i>········</i><b class="ds">Each</b><i>·</i><b class="ds">creator</b><i>·</i><b class="ds">is</b><i>·</i><b class="ds">a</b><i>·</i><b class="ds">dict</b><i>·</i><b class="ds">with</b><i>·</i><b class="ds">the</b><i>·</i><b class="ds">following</b><i>·</i><b class="ds">keys:</b></div>
<div class="ln" style="top:420px;left:699.5px">26</div>
<div class="gd" style="top:420px;left:786px"></div>
<div class="gd" style="top:420px;left:816px"></div>
<div class="cr" style="top:420px;left:786.00px"><i>········</i><b class="ds">-</b><i>·</i><b class="ds">name:</b><i>·</i><b class="ds">the</b><i>·</i><b class="ds">full</b><i>·</i><b class="ds">name</b><i>·</i><b class="ds">of</b><i>·</i><b class="ds">the</b><i>·</i><b class="ds">creator</b></div>
<div class="ln" style="top:438px;left:699.5px">27</div>
<div class="gd" style="top:438px;left:786px"></div>
<div class="gd" style="top:438px;left:816px"></div>
<div class="cr" style="top:438px;left:786.00px"><i>········</i><b class="ds">-</b><i>·</i><b class="ds">name_sort:</b><i>·</i><b class="ds">the</b><i>·</i><b class="ds">name</b><i>·</i><b class="ds">of</b><i>·</i><b class="ds">the</b><i>·</i><b class="ds">creator,</b><i>·</i><b class="ds">sorted</b><i>·</i><b class="ds">by</b><i>·</i><b class="ds">last</b><i>·</i><b class="ds">name</b></div>
<div class="ln" style="top:456px;left:699.5px">28</div>
<div class="gd" style="top:456px;left:786px"></div>
<div class="gd" style="top:456px;left:816px"></div>
<div class="cr" style="top:456px;left:786.00px"><i>········</i><b class="q">&#x27;&#x27;&#x27;</b></div>
<div class="ln" style="top:474px;left:699.5px">29</div>
<div class="gd" style="top:474px;left:786px"></div>
<div class="gd" style="top:474px;left:816px"></div>
<div class="cr" style="top:474px;left:786.00px"><i>········</i><b class="cm">#</b><i>·</i><b class="cm">Instatiate</b><i>·</i><b class="cm">the</b><i>·</i><b class="cm">list</b></div>
<div class="ln" style="top:492px;left:699.5px">30</div>
<div class="gd" style="top:492px;left:786px"></div>
<div class="gd" style="top:492px;left:816px"></div>
<div class="cr" style="top:492px;left:786.00px"><i>········</i><b class="t">d</b><b class="y">[</b><b class="st">&#x27;creators&#x27;</b><b class="y">]</b><i>·</i><b class="o">=</b><i>·</i><b class="ty">list</b><b class="y">()</b></div>
<div class="ln" style="top:510px;left:699.5px">31</div>
<div class="gd" style="top:510px;left:786px"></div>
<div class="gd" style="top:510px;left:816px"></div>
<div class="cr" style="top:510px;left:786.00px"><i>········</i><b class="cm">#</b><i>·</i><b class="cm">Split</b><i>·</i><b class="cm">the</b><i>·</i><b class="cm">creators</b><i>·</i><b class="cm">by</b><i>·</i><b class="cm">&#x27;</b><i>·</i><b class="cm">and</b><i>·</i><b class="cm">&#x27;</b><i>·</i><b class="cm">or</b><i>·</i><b class="cm">&#x27;</b><i>·</i><b class="cm">&amp;</b><i>·</i><b class="cm">&#x27;</b></div>
<div class="ln" style="top:528px;left:699.5px">32</div>
<div class="gd" style="top:528px;left:786px"></div>
<div class="gd" style="top:528px;left:816px"></div>
<div class="cr" style="top:528px;left:786.00px"><i>········</i><b class="t">creators</b><i>·</i><b class="o">=</b><i>·</i><b class="t">re.split</b><b class="y">(</b><b class="st">&#x27;\sand\s|\s\&amp;\s&#x27;</b><b class="t">,</b><i>·</i><b class="a">val</b><b class="y">)</b></div>
<div class="ln" style="top:546px;left:699.5px">33</div>
<div class="gd" style="top:546px;left:786px"></div>
<div class="gd" style="top:546px;left:816px"></div>
<div class="cr" style="top:546px;left:786.00px"><i>········</i><b class="cm">#</b></div>
<div class="ln" style="top:564px;left:699.5px">34</div>
<div class="gd" style="top:564px;left:786px"></div>
<div class="gd" style="top:564px;left:816px"></div>
<div class="cr" style="top:564px;left:786.00px"><i>········</i><b class="k">for</b><i>·</i><b class="t">creator</b><i>·</i><b class="k">in</b><i>·</i><b class="t">creators:</b></div>
<div class="ln" style="top:582px;left:699.5px">35</div>
<div class="gd" style="top:582px;left:786px"></div>
<div class="gd" style="top:582px;left:816px"></div>
<div class="gd" style="top:582px;left:845px"></div>
<div class="cr" style="top:582px;left:786.00px"><i>············</i><b class="t">humanName</b><i>·</i><b class="o">=</b><i>·</i><b class="t">HumanName</b><b class="y">(</b><b class="a">creator</b><b class="y">)</b></div>
<div class="ln" style="top:600px;left:699.5px">36</div>
<div class="gd" style="top:600px;left:786px"></div>
<div class="gd" style="top:600px;left:816px"></div>
<div class="gd" style="top:600px;left:845px"></div>
<div class="cr" style="top:600px;left:786.00px"><i>············</i><b class="cm">#</b></div>
<div class="ln" style="top:618px;left:699.5px">37</div>
<div class="gd" style="top:618px;left:786px"></div>
<div class="gd" style="top:618px;left:816px"></div>
<div class="gd" style="top:618px;left:845px"></div>
<div class="cr" style="top:618px;left:786.00px"><i>············</i><b class="t">first_middle_name</b><i>·</i><b class="o">=</b><i>·</i><b class="q2">&quot;</b><i>·</i><b class="q2">&quot;</b><b class="t">.join</b><b class="y">(</b><b class="m">[</b><b class="a">a</b><i>·</i><b class="k">for</b><i>·</i><b class="a">a</b><i>·</i><b class="k">in</b><i>·</i><b class="a">humanName.</b></div>
<div class="gd" style="top:636px;left:786px"></div>
<div class="gd" style="top:636px;left:816px"></div>
<div class="gd" style="top:636px;left:845px"></div>
<div class="cr" style="top:636px;left:874.34px"><b class="a">first_list</b><b class="m">]</b><b class="y">)</b></div>
<div class="ln" style="top:654px;left:699.5px">38</div>
<div class="gd" style="top:654px;left:786px"></div>
<div class="gd" style="top:654px;left:816px"></div>
<div class="gd" style="top:654px;left:845px"></div>
<div class="cr" style="top:654px;left:786.00px"><i>············</i><b class="t">last_name</b><i>·</i><b class="o">=</b><i>·</i><b class="q2">&quot;</b><i>·</i><b class="q2">&quot;</b><b class="t">.join</b><b class="y">(</b><b class="m">[</b><b class="a">a</b><i>·</i><b class="k">for</b><i>·</i><b class="a">a</b><i>·</i><b class="k">in</b><i>·</i><b class="a">humanName.last_list</b><b class="m">]</b><b class="y">)</b></div>
<div class="ln" style="top:672px;left:699.5px">39</div>
<div class="gd" style="top:672px;left:786px"></div>
<div class="gd" style="top:672px;left:816px"></div>
<div class="gd" style="top:672px;left:845px"></div>
<div class="cr" style="top:672px;left:786.00px"><i>············</i><b class="cm">#</b></div>
<div class="ln" style="top:690px;left:699.5px">40</div>
<div class="gd" style="top:690px;left:786px"></div>
<div class="gd" style="top:690px;left:816px"></div>
<div class="gd" style="top:690px;left:845px"></div>
<div class="cr" style="top:690px;left:786.00px"><i>············</i><b class="t">d</b><b class="y">[</b><b class="st">&#x27;creators&#x27;</b><b class="y">]</b><b class="t">.append</b><b class="y">(</b><b class="m">{</b></div>
<div class="ln" style="top:708px;left:699.5px">41</div>
<div class="gd" style="top:708px;left:786px"></div>
<div class="gd" style="top:708px;left:816px"></div>
<div class="gd" style="top:708px;left:845px"></div>
<div class="gd" style="top:708px;left:875px"></div>
<div class="cr" style="top:708px;left:786.00px"><i>················</i><b class="st">&#x27;name&#x27;</b><b class="t">:</b><i>·</i><b class="k">f</b><b class="st">&#x27;</b><b class="u">{</b><b class="a">first_middle_name</b><b class="u">}</b><i>·</i><b class="u">{</b><b class="a">last_name</b><b class="u">}</b><b class="st">&#x27;</b><b class="t">,</b></div>
<div class="ln" style="top:726px;left:699.5px">42</div>
<div class="gd" style="top:726px;left:786px"></div>
<div class="gd" style="top:726px;left:816px"></div>
<div class="gd" style="top:726px;left:845px"></div>
<div class="gd" style="top:726px;left:875px"></div>
<div class="cr" style="top:726px;left:786.00px"><i>················</i><b class="st">&#x27;name_sort&#x27;</b><b class="t">:</b><i>·</i><b class="k">f</b><b class="st">&#x27;</b><b class="u">{</b><b class="a">last_name</b><b class="u">}</b><b class="t">,</b><i>·</i><b class="u">{</b><b class="a">first_middle_name</b><b class="u">}</b><b class="st">&#x27;</b><b class="t">,</b></div>
<div class="ln" style="top:744px;left:699.5px">43</div>
<div class="gd" style="top:744px;left:786px"></div>
<div class="gd" style="top:744px;left:816px"></div>
<div class="gd" style="top:744px;left:845px"></div>
<div class="cr" style="top:744px;left:786.00px"><i>············</i><b class="m">}</b><b class="y">)</b></div>
<div class="ln" style="top:762px;left:699.5px">44</div>
<div class="gd" style="top:762px;left:786px"></div>
<div class="ln" style="top:780px;left:699.5px">45</div>
<div class="gd" style="top:780px;left:786px"></div>
<div class="cr" style="top:780px;left:786.00px"><i>····</i><b class="k">def</b><i>·</i><b class="f">get_dcs</b><b class="y">(</b><b class="p">self</b><b class="t">,</b><i>·</i><b class="p">epub</b><b class="t">,</b><i>·</i><b class="p">path</b><b class="y">)</b><b class="t">:</b></div>
<div class="ln" style="top:798px;left:699.5px">46</div>
<div class="gd" style="top:798px;left:786px"></div>
<div class="gd" style="top:798px;left:816px"></div>
<div class="cr" style="top:798px;left:786.00px"><i>········</i><b class="q">&#x27;&#x27;&#x27;</b></div>
<div class="ln" style="top:816px;left:699.5px">47</div>
<div class="gd" style="top:816px;left:786px"></div>
<div class="gd" style="top:816px;left:816px"></div>
<div class="cr" style="top:816px;left:786.00px"><i>········</i><b class="ds">Returns</b><i>·</i><b class="ds">a</b><i>·</i><b class="ds">dict</b><i>·</i><b class="ds">of</b><i>·</i><b class="ds">Dublin</b><i>·</i><b class="ds">Core</b><i>·</i><b class="ds">metadata.</b></div>
<div class="ln" style="top:834px;left:699.5px">48</div>
<div class="gd" style="top:834px;left:786px"></div>
<div class="gd" style="top:834px;left:816px"></div>
<div class="cr" style="top:834px;left:786.00px"><i>········</i><b class="q">&#x27;&#x27;&#x27;</b></div>
<div class="ln" style="top:852px;left:699.5px">49</div>
<div class="gd" style="top:852px;left:786px"></div>
<div class="gd" style="top:852px;left:816px"></div>
<div class="cr" style="top:852px;left:786.00px"><i>········</i><b class="t">dcs</b><i>·</i><b class="o">=</b><i>·</i><b class="ty">dict</b><b class="y">()</b></div>
<div class="ln" style="top:870px;left:699.5px">50</div>
<div class="gd" style="top:870px;left:786px"></div>
<div class="gd" style="top:870px;left:816px"></div>
<div class="cr" style="top:870px;left:786.00px"><i>········</i><b class="cm">#</b><i>·</i><b class="cm">Get</b><i>·</i><b class="cm">the</b><i>·</i><b class="cm">soup</b><i>·</i><b class="cm">of</b><i>·</i><b class="cm">the</b><i>·</i><b class="cm">package</b></div>
<div class="ln" style="top:888px;left:699.5px">51</div>
<div class="gd" style="top:888px;left:786px"></div>
<div class="gd" style="top:888px;left:816px"></div>
<div class="cr" style="top:888px;left:786.00px"><i>········</i><b class="t">pkg_soup</b><i>·</i><b class="o">=</b><i>·</i><b class="t">get_soup</b><b class="y">(</b><b class="a">epub</b><b class="o">=</b><b class="a">epub</b><b class="t">,</b><i>·</i><b class="a">path</b><b class="o">=</b><b class="a">path</b><b class="y">)</b></div>
<div class="ln" style="top:906px;left:699.5px">52</div>
<div class="gd" style="top:906px;left:786px"></div>
<div class="gd" style="top:906px;left:816px"></div>
<div class="cr" style="top:906px;left:786.00px"><i>········</i><b class="t">metadata</b><i>·</i><b class="o">=</b><i>·</i><b class="t">pkg_soup.find</b><b class="y">(</b><b class="st">&#x27;metadata&#x27;</b><b class="y">)</b></div>
<div class="ln" style="top:924px;left:699.5px">53</div>
<div class="gd" style="top:924px;left:786px"></div>
<div class="gd" style="top:924px;left:816px"></div>
<div class="cr" style="top:924px;left:786.00px"><i>········</i><b class="cm">#</b></div>
<div class="ln" style="top:942px;left:699.5px">54</div>
<div class="gd" style="top:942px;left:786px"></div>
<div class="gd" style="top:942px;left:816px"></div>
<div class="cr" style="top:942px;left:786.00px"><i>········</i><b class="cm">#</b><i>·</i><b class="cm">Loop</b><i>·</i><b class="cm">through</b><i>·</i><b class="cm">each</b><i>·</i><b class="cm">child</b><i>·</i><b class="cm">tag</b><i>·</i><b class="cm">of</b><i>·</i><b class="cm">&lt;metadata&gt;</b></div>
<div class="ln" style="top:960px;left:699.5px">55</div>
<div class="gd" style="top:960px;left:786px"></div>
<div class="gd" style="top:960px;left:816px"></div>
<div class="cr" style="top:960px;left:786.00px"><i>········</i><b class="k">for</b><i>·</i><b class="t">tag</b><i>·</i><b class="k">in</b><i>·</i><b class="ty">list</b><b class="y">(</b><b class="bi">filter</b><b class="m">(</b></div>
<div class="ln" style="top:978px;left:699.5px">56</div>
<div class="gd" style="top:978px;left:786px"></div>
<div class="gd" style="top:978px;left:816px"></div>
<div class="gd" style="top:978px;left:845px"></div>
<div class="cr" style="top:978px;left:786.00px"><i>············</i><b class="k">lambda</b><i>·</i><b class="p">x</b><b class="t">:</b><i>·</i><b class="bi">isinstance</b><b class="u">(</b><b class="a">x</b><b class="t">,</b><i>·</i><b class="a">Tag</b><b class="u">)</b><b class="t">,</b></div>
<div class="ln" style="top:996px;left:699.5px">57</div>
<div class="gd" style="top:996px;left:786px"></div>
<div class="gd" style="top:996px;left:816px"></div>
<div class="gd" style="top:996px;left:845px"></div>
<div class="cr" style="top:996px;left:786.00px"><i>············</i><b class="a">metadata.children</b></div>
<div class="ln" style="top:1014px;left:699.5px">58</div>
<div class="gd" style="top:1014px;left:786px"></div>
<div class="gd" style="top:1014px;left:816px"></div>
<div class="cr" style="top:1014px;left:786.00px"><i>········</i><b class="m">)</b><b class="y">)</b><b class="t">:</b></div>
<div class="ln" style="top:1032px;left:699.5px">59</div>
<div class="gd" style="top:1032px;left:786px"></div>
<div class="gd" style="top:1032px;left:816px"></div>
<div class="gd" style="top:1032px;left:845px"></div>
<div class="cr" style="top:1032px;left:786.00px"><i>············</i><b class="cm">#</b><i>·</i><b class="cm">Most</b><i>·</i><b class="cm">metadata</b><i>·</i><b class="cm">tags</b><i>·</i><b class="cm">are</b><i>·</i><b class="cm">prefixed</b><i>·</i><b class="cm">with</b><i>·</i><b class="cm">&#x27;dc:&#x27;,</b><i>·</i><b class="cm">which</b><i>·</i><b class="cm">is</b><i>·</i><b class="cm">what</b></div>
    </div>
    <div class="abs" style="left:601px;top:0;width:1px;height:934px;background:#3a3e52"></div>
    <div class="abs" style="left:606px;top:41px;width:5px;height:6px;background:#8a8d96"></div>
    <div class="abs" style="left:602px;top:121px;width:13px;height:2px;background:#7a5ab8"></div>
    <div class="abs" style="left:606px;top:122px;width:5px;height:5px;background:#8a8d96"></div>
  </div>
</div>
</body></html>
